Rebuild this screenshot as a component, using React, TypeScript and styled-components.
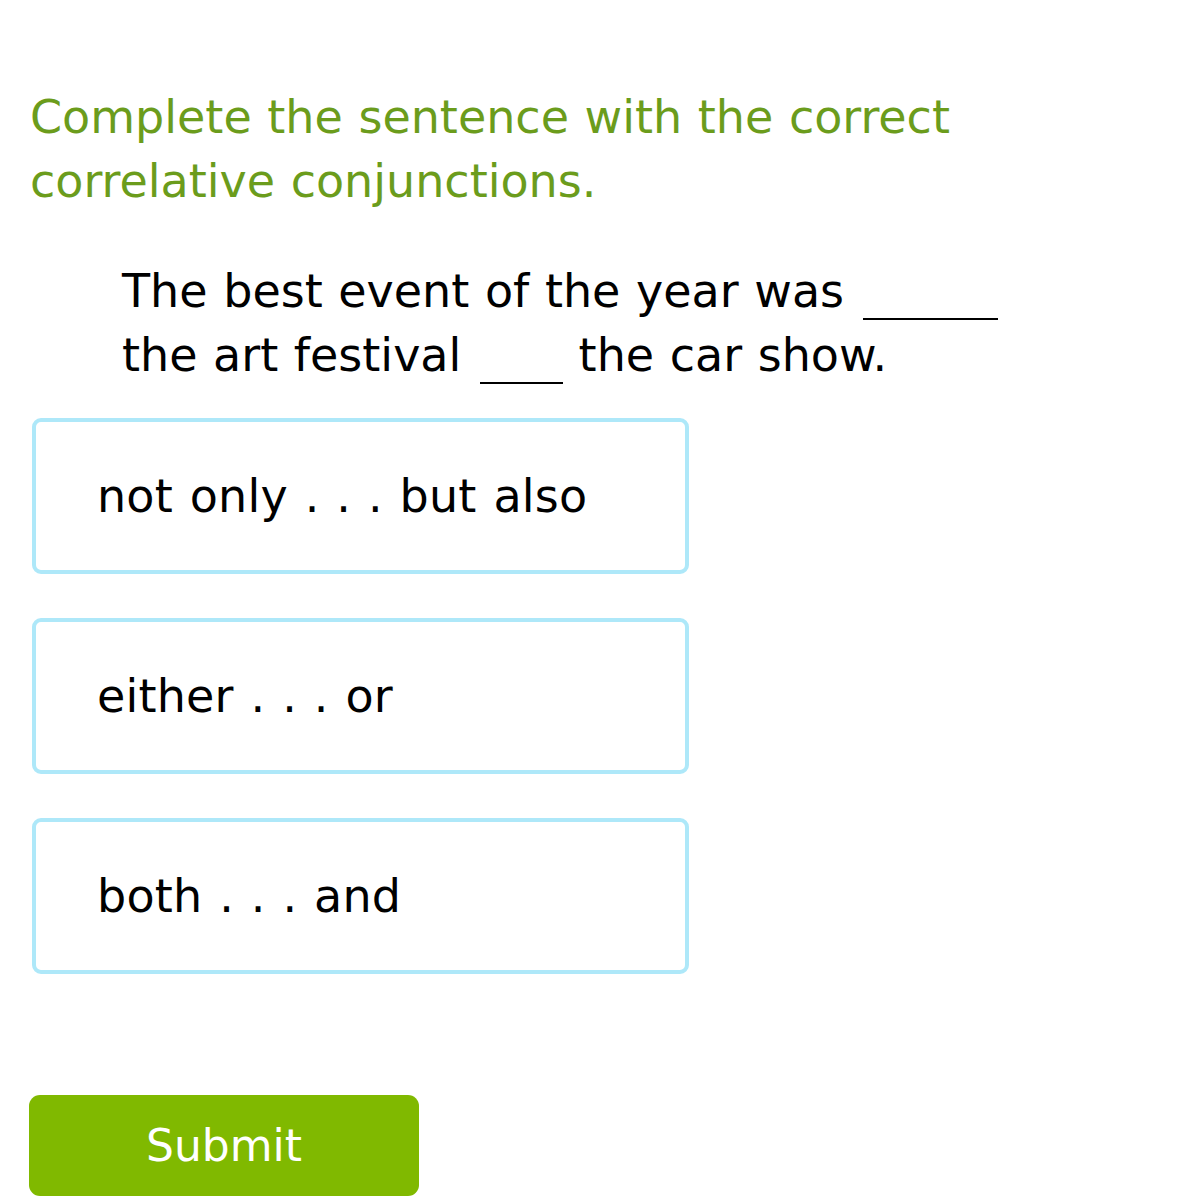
import React from 'react';
import styled, { createGlobalStyle } from 'styled-components';

const GlobalStyle = createGlobalStyle`
  body {
    margin: 0;
    background: #fff;
    font-family: "DejaVu Sans", Verdana, sans-serif;
  }
`;

const Page = styled.div`
  padding: 85px 0 0 30px;
`;

const Prompt = styled.h1`
  margin: 0;
  font-size: 46px;
  font-weight: normal;
  line-height: 64px;
  word-spacing: 1px;
  color: #6b9c1c;
  width: 960px;
`;

const Sentence = styled.p`
  margin: 46px 0 0 92px;
  font-size: 46px;
  line-height: 64px;
  word-spacing: 1px;
  color: #000;
  width: 900px;
`;

const Blank = styled.span<{ $width: number }>`
  display: inline-block;
  width: ${(p) => p.$width}px;
  height: 0;
  margin-left: 3px;
  border-bottom: 2px solid #000;
  vertical-align: -13px;
`;

const Choices = styled.div`
  display: flex;
  flex-direction: column;
  gap: 44px;
  margin: 31px 0 0 2px;
`;

const Choice = styled.button`
  display: flex;
  align-items: center;
  box-sizing: border-box;
  width: 657px;
  height: 156px;
  padding: 0 0 0 61px;
  background: #fff;
  border: 4px solid #aee8f9;
  border-radius: 9px;
  font-family: inherit;
  font-size: 46px;
  word-spacing: 2px;
  letter-spacing: 0.2px;
  color: #000;
  text-align: left;
  cursor: pointer;
`;

const SubmitButton = styled.button`
  display: block;
  width: 390px;
  height: 101px;
  margin: 121px 0 0 -1px;
  background: #80b900;
  border: none;
  border-radius: 11px;
  font-family: inherit;
  font-size: 44px;
  color: #fff;
  cursor: pointer;
`;

const options = ['not only . . . but also', 'either . . . or', 'both . . . and'];

export default function App() {
  return (
    <>
      <GlobalStyle />
      <Page>
        <Prompt>Complete the sentence with the correct correlative conjunctions.</Prompt>
        <Sentence>
          The best event of the year was <Blank $width={135} />
          <br />
          the art festival <Blank $width={83} /> the car show.
        </Sentence>
        <Choices>
          {options.map((o) => (
            <Choice key={o}>{o}</Choice>
          ))}
        </Choices>
        <SubmitButton>Submit</SubmitButton>
      </Page>
    </>
  );
}
